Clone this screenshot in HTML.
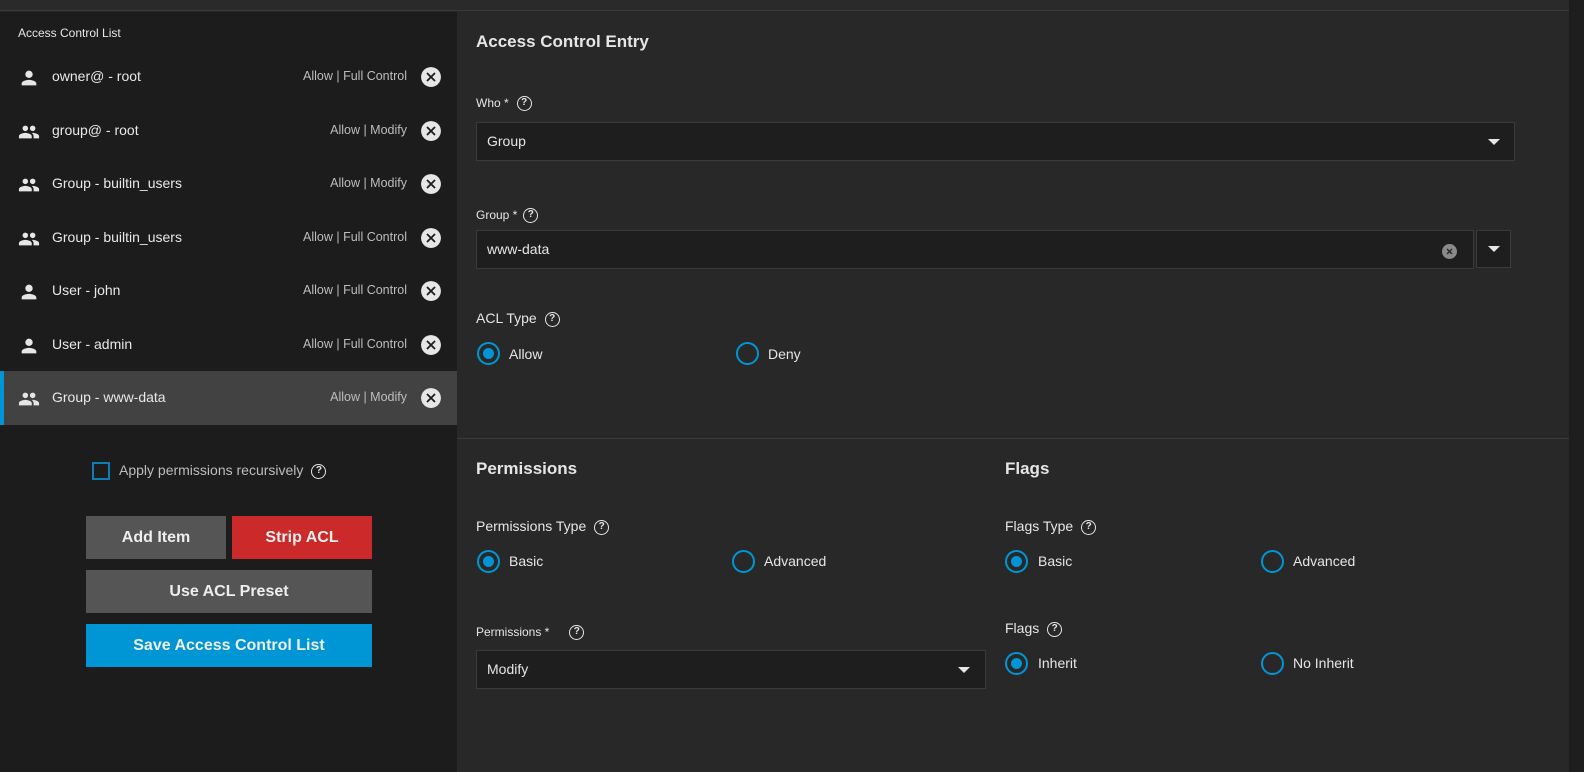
<!DOCTYPE html>
<html><head><style>
*{box-sizing:border-box;margin:0;padding:0}
body{width:1584px;height:772px;background:#282828;font-family:"Liberation Sans",sans-serif;color:#e6e6e6;position:relative;overflow:hidden}
.a{position:absolute}
.top{left:0;top:0;width:1584px;height:11px;background:#2a2a2a;border-bottom:1px solid #3a3a3a}
.left{left:0;top:12px;width:457px;height:760px;background:#1c1c1c}
.rstrip{left:1569px;top:0;width:15px;height:772px;background:#1e1e1e}
.row{position:absolute;left:0;width:457px;height:53.5px}
.row .ic{position:absolute;left:18px;top:17px}
.row .nm{position:absolute;left:52px;top:0;line-height:53px;font-size:14px;color:#e8e8e8}
.row .st{position:absolute;right:50px;top:0;line-height:53px;font-size:12.5px;color:#bdbdbd}
.row .x{position:absolute;left:421px;top:17px;width:20px;height:20px;border-radius:50%;background:#e6e6e6}
.sel{background:#424242;border-left:4px solid #0095d5}
.lbl{font-size:12px;color:#e6e6e6}
.q{display:inline-block;width:15px;height:15px;border:1.6px solid #e6e6e6;border-radius:50%;font-size:10px;line-height:12px;text-align:center;font-weight:bold;vertical-align:middle;margin-left:8px}
.field{background:#1e1e1e;border:1px solid #3a3a3a;font-size:14px;padding-left:10px;line-height:37px;height:39px}
.tri{position:absolute;width:0;height:0;border-left:6px solid transparent;border-right:6px solid transparent;border-top:6px solid #e6e6e6}
.rad{position:absolute;width:23px;height:23px;border:2px solid #0095d5;border-radius:50%}
.rad.on::after{content:"";position:absolute;left:4px;top:4px;width:11px;height:11px;border-radius:50%;background:#0095d5}
.rt{position:absolute;font-size:14px;color:#e6e6e6}
.h{position:absolute;font-size:17px;font-weight:bold;color:#e6e6e6}
.btn{position:absolute;font-size:16px;font-weight:bold;text-align:center;line-height:43px;height:43px;color:#eee}
</style></head><body>
<div class="a top"></div>
<div class="a left">
<div class="a" style="left:18px;top:14px;font-size:12px;color:#e6e6e6">Access Control List</div>
</div>
<div class="a rstrip"></div>

<svg width="0" height="0" style="position:absolute"><defs>
<symbol id="u" viewBox="0 0 24 24"><path fill="#e6e6e6" d="M12 12a4 4 0 1 0 0-8 4 4 0 0 0 0 8zm0 2c-2.7 0-8 1.3-8 4v2h16v-2c0-2.7-5.3-4-8-4z"/></symbol>
<symbol id="g" viewBox="0 0 24 24"><path fill="#e6e6e6" d="M16 11a3 3 0 1 0 0-6 3 3 0 0 0 0 6zm-8 0a3 3 0 1 0 0-6 3 3 0 0 0 0 6zm0 2c-2.3 0-7 1.2-7 3.5V19h14v-2.5C15 14.2 10.3 13 8 13zm8 0c-.3 0-.6 0-1 .1 1.2.8 2 2 2 3.4V19h6v-2.5c0-2.3-4.7-3.5-7-3.5z"/></symbol>
<symbol id="x" viewBox="0 0 20 20"><circle cx="10" cy="10" r="10" fill="#e6e6e6"/><path d="M6 6l8 8M14 6l-8 8" stroke="#1c1c1c" stroke-width="1.8"/></symbol>
</defs></svg>

<div class="row" style="top:50px"><svg class="ic" width="22" height="22"><use href="#u"/></svg><span class="nm">owner@ - root</span><span class="st">Allow | Full Control</span><svg class="x" width="20" height="20" style="background:none"><use href="#x"/></svg></div>
<div class="row" style="top:103.5px"><svg class="ic" width="22" height="22"><use href="#g"/></svg><span class="nm">group@ - root</span><span class="st">Allow | Modify</span><svg class="x" width="20" height="20" style="background:none"><use href="#x"/></svg></div>
<div class="row" style="top:157px"><svg class="ic" width="22" height="22"><use href="#g"/></svg><span class="nm">Group - builtin_users</span><span class="st">Allow | Modify</span><svg class="x" width="20" height="20" style="background:none"><use href="#x"/></svg></div>
<div class="row" style="top:210.5px"><svg class="ic" width="22" height="22"><use href="#g"/></svg><span class="nm">Group - builtin_users</span><span class="st">Allow | Full Control</span><svg class="x" width="20" height="20" style="background:none"><use href="#x"/></svg></div>
<div class="row" style="top:264px"><svg class="ic" width="22" height="22"><use href="#u"/></svg><span class="nm">User - john</span><span class="st">Allow | Full Control</span><svg class="x" width="20" height="20" style="background:none"><use href="#x"/></svg></div>
<div class="row" style="top:317.5px"><svg class="ic" width="22" height="22"><use href="#u"/></svg><span class="nm">User - admin</span><span class="st">Allow | Full Control</span><svg class="x" width="20" height="20" style="background:none"><use href="#x"/></svg></div>
<div class="row sel" style="top:371px"><svg class="ic" width="22" height="22" style="left:14px"><use href="#g"/></svg><span class="nm" style="left:48px">Group - www-data</span><span class="st">Allow | Modify</span><svg class="x" width="20" height="20" style="background:none;left:417px"><use href="#x"/></svg></div>

<div class="a" style="left:92px;top:462px;width:18px;height:18px;border:2px solid #0a7fb5"></div>
<div class="a" style="left:119px;top:462px;font-size:14px;color:#bdbdbd">Apply permissions recursively<span class="q" style="color:#e6e6e6">?</span></div>
<div class="btn" style="left:86px;top:516px;width:140px;background:#555">Add Item</div>
<div class="btn" style="left:232px;top:516px;width:140px;background:#cc2a2a">Strip ACL</div>
<div class="btn" style="left:86px;top:570px;width:286px;background:#555">Use ACL Preset</div>
<div class="btn" style="left:86px;top:624px;width:286px;background:#0095d5">Save Access Control List</div>

<div class="h" style="left:476px;top:32px">Access Control Entry</div>
<div class="a lbl" style="left:476px;top:96px">Who *<span class="q">?</span></div>
<div class="a field" style="left:476px;top:122px;width:1039px">Group</div>
<div class="tri" style="left:1488px;top:139px"></div>
<div class="a lbl" style="left:476px;top:208px">Group *<span class="q" style="margin-left:6px">?</span></div>
<div class="a field" style="left:476px;top:230px;width:998px">www-data</div>
<svg class="a" style="left:1442px;top:244px" width="15" height="15"><circle cx="7.5" cy="7.5" r="7.5" fill="#8a8a8a"/><path d="M5 5l5 5M10 5l-5 5" stroke="#2a2a2a" stroke-width="1.5"/></svg>
<div class="a" style="left:1476px;top:230px;width:35px;height:38px;background:#1e1e1e;border:1px solid #3a3a3a"></div>
<div class="tri" style="left:1488px;top:246px"></div>
<div class="a" style="left:476px;top:310px;font-size:14px">ACL Type<span class="q">?</span></div>
<div class="rad on" style="left:477px;top:342px"></div><div class="rt" style="left:509px;top:346px">Allow</div>
<div class="rad" style="left:736px;top:342px"></div><div class="rt" style="left:768px;top:346px">Deny</div>
<div class="a" style="left:457px;top:438px;width:1112px;height:1px;background:#3a3a3a"></div>

<div class="h" style="left:476px;top:459px">Permissions</div>
<div class="a" style="left:476px;top:518px;font-size:14px">Permissions Type<span class="q">?</span></div>
<div class="rad on" style="left:477px;top:550px"></div><div class="rt" style="left:509px;top:553px">Basic</div>
<div class="rad" style="left:732px;top:550px"></div><div class="rt" style="left:764px;top:553px">Advanced</div>
<div class="a lbl" style="left:476px;top:625px">Permissions *<span class="q" style="margin-left:20px">?</span></div>
<div class="a field" style="left:476px;top:650px;width:510px">Modify</div>
<div class="tri" style="left:958px;top:667px"></div>

<div class="h" style="left:1005px;top:459px">Flags</div>
<div class="a" style="left:1005px;top:518px;font-size:14px">Flags Type<span class="q">?</span></div>
<div class="rad on" style="left:1005px;top:550px"></div><div class="rt" style="left:1038px;top:553px">Basic</div>
<div class="rad" style="left:1261px;top:550px"></div><div class="rt" style="left:1293px;top:553px">Advanced</div>
<div class="a" style="left:1005px;top:620px;font-size:14px">Flags<span class="q">?</span></div>
<div class="rad on" style="left:1005px;top:652px"></div><div class="rt" style="left:1038px;top:655px">Inherit</div>
<div class="rad" style="left:1261px;top:652px"></div><div class="rt" style="left:1293px;top:655px">No Inherit</div>
</body></html>
